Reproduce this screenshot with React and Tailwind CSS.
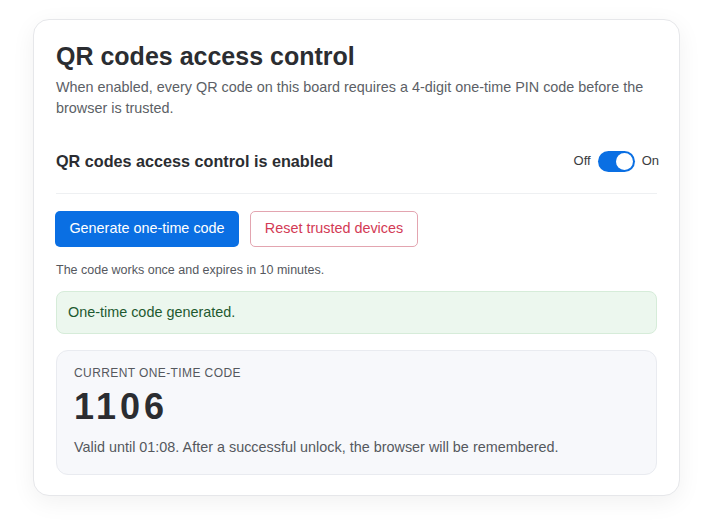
import React from "react";

export default function App() {
  return (
    <div className="min-h-[527px] bg-white pt-[19px] pl-[33px] pr-[21px] pb-[31px]" style={{ fontFamily: '"Liberation Sans", Arial, Helvetica, sans-serif' }}>
      <div className="w-[647px] rounded-[16px] border border-[#e6e7ea] bg-white px-[22px] pt-[21px] pb-[20px] shadow-[0_6px_24px_rgba(0,0,0,0.06)]">
        <h1 className="text-[25px] leading-[30px] font-bold text-[#2b2d31]">QR codes access control</h1>
        <p className="mt-[6px] text-[14.4px] leading-[21px] text-[#5c5f66]">
          When enabled, every QR code on this board requires a 4-digit one-time PIN code before the browser is trusted.
        </p>
        <div className="mt-[30px] flex items-center justify-between pb-[20px] border-b border-[#eef0f2]">
          <div className="text-[16.2px] font-bold text-[#2b2d31]">QR codes access control is enabled</div>
          <div className="flex items-center gap-[7px] text-[13px] text-[#3a3c40] mr-[-2px]">
            <span>Off</span>
            <div className="relative h-[21px] w-[37px] rounded-full bg-[#0a6fe3]">
              <div className="absolute right-[2px] top-[2px] h-[17px] w-[17px] rounded-full bg-white" />
            </div>
            <span>On</span>
          </div>
        </div>
        <div className="mt-[17px] flex gap-[11px] ml-[-1px]">
          <button className="h-[36px] w-[184px] rounded-[5px] bg-[#0a6fe3] text-[14.4px] text-white">Generate one-time code</button>
          <button className="h-[36px] w-[168px] rounded-[5px] border border-[#e3a5b0] bg-white text-[14.4px] text-[#d33a55]">Reset trusted devices</button>
        </div>
        <p className="mt-[15px] text-[12.5px] leading-[16px] text-[#55585e]">The code works once and expires in 10 minutes.</p>
        <div className="mt-[13px] h-[43px] rounded-[8px] border border-[#d6ecd9] bg-[#ecf7ee] px-[11px] flex items-center text-[14.4px] text-[#1e5a30]">
          One-time code generated.
        </div>
        <div className="mt-[16px] rounded-[12px] border border-[#e9ebf0] bg-[#f7f8fb] px-[17px] pt-[15px] pb-[17px]">
          <div className="text-[12px] leading-[14px] tracking-[0.4px] text-[#55585e]">CURRENT ONE-TIME CODE</div>
          <div className="mt-[7px] text-[36px] leading-[40px] font-bold tracking-[4px] text-[#2b2d31]">1106</div>
          <p className="mt-[10px] text-[14.4px] leading-[20px] text-[#55585e]">Valid until 01:08. After a successful unlock, the browser will be remembered.</p>
        </div>
      </div>
    </div>
  );
}
